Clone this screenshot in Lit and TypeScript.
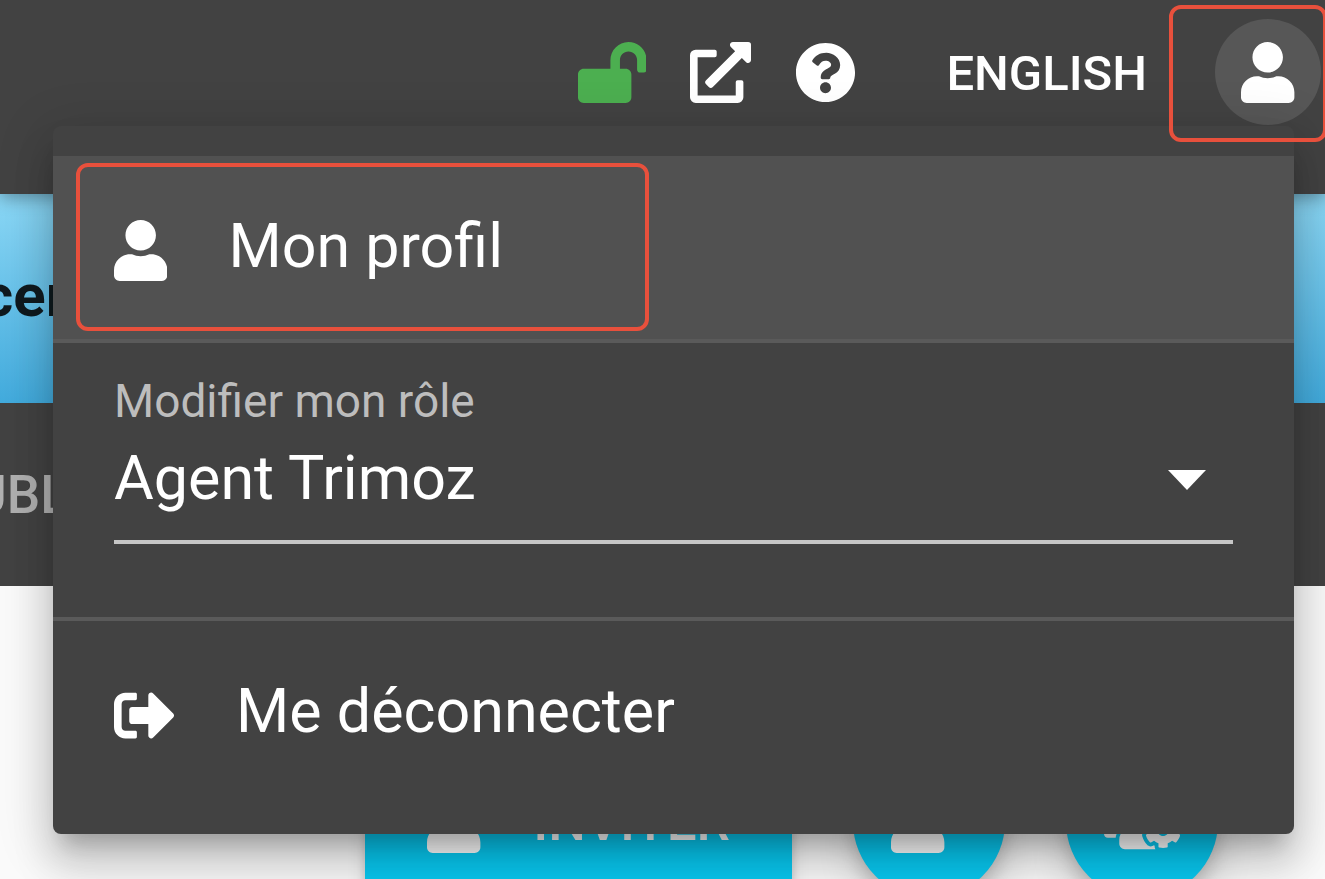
import { LitElement, html, css, svg } from "lit";
import { customElement, property, state } from "lit/decorators.js";

interface Glyph {
  box: string;
  d: string;
}

const GLYPHS: Record<string, Glyph> = {
  unlock: {
    box: "0 0 576 512",
    d: "M423.5 0C339.5.3 272 69.5 272 153.5V224H48c-26.5 0-48 21.5-48 48v192c0 26.5 21.5 48 48 48h352c26.5 0 48-21.5 48-48V272c0-26.5-21.5-48-48-48h-48v-71.1c0-39.6 31.7-72.5 71.3-72.9 40-.4 72.7 32.1 72.7 72v80c0 13.3 10.7 24 24 24h32c13.3 0 24-10.7 24-24v-80C576 68 507.5-.3 423.5 0z",
  },
  external: {
    box: "0 0 512 512",
    d: "M432,320H400a16,16,0,0,0-16,16V448H64V128H208a16,16,0,0,0,16-16V80a16,16,0,0,0-16-16H48A48,48,0,0,0,0,112V464a48,48,0,0,0,48,48H400a48,48,0,0,0,48-48V336A16,16,0,0,0,432,320ZM488,0h-128c-21.37,0-32.05,25.91-17,41l35.73,35.73L135,320.37a24,24,0,0,0,0,34L157.67,377a24,24,0,0,0,34,0L435.28,133.32,471,169c15,15,41,4.5,41-17V24A24,24,0,0,0,488,0Z",
  },
  help: {
    box: "0 0 512 512",
    d: "M504 256c0 136.997-111.043 248-248 248S8 392.997 8 256C8 119.083 119.043 8 256 8s248 111.083 248 248zM262.655 90c-54.497 0-89.255 22.957-116.549 63.758-3.536 5.286-2.353 12.415 2.715 16.258l34.699 26.31c5.205 3.947 12.621 3.008 16.665-2.122 17.864-22.658 30.113-35.797 57.303-35.797 20.429 0 45.698 13.148 45.698 32.958 0 14.976-12.363 22.667-32.534 33.976C247.128 238.528 216 254.941 216 296v4c0 6.627 5.373 12 12 12h56c6.627 0 12-5.373 12-12v-1.333c0-28.462 83.186-29.647 83.186-106.667 0-58.002-60.165-102-116.531-102zM256 338c-25.365 0-46 20.635-46 46 0 25.364 20.635 46 46 46s46-20.636 46-46c0-25.365-20.635-46-46-46z",
  },
  user: {
    box: "0 0 448 512",
    d: "M224 256c70.7 0 128-57.3 128-128S294.7 0 224 0 96 57.3 96 128s57.3 128 128 128zm89.6 32h-16.7c-22.2 10.2-46.9 16-72.9 16s-50.6-5.8-72.9-16h-16.7C60.2 288 0 348.2 0 422.4V464c0 26.5 21.5 48 48 48h352c26.5 0 48-21.5 48-48v-41.6c0-74.2-60.2-134.4-134.4-134.4z",
  },
  userPlus: {
    box: "0 0 640 512",
    d: "M624 208h-64v-64c0-8.8-7.2-16-16-16h-32c-8.8 0-16 7.2-16 16v64h-64c-8.8 0-16 7.2-16 16v32c0 8.800 7.200 16 16 16h64v64c0 8.800 7.200 16 16 16h32c8.800 0 16-7.200 16-16v-64h64c8.800 0 16-7.200 16-16v-32c0-8.800-7.200-16-16-16zM224 256c70.7 0 128-57.3 128-128S294.7 0 224 0 96 57.3 96 128s57.3 128 128 128zm89.6 32h-16.7c-22.2 10.2-46.9 16-72.9 16s-50.6-5.8-72.9-16h-16.7C60.2 288 0 348.2 0 422.4V464c0 26.5 21.5 48 48 48h352c26.5 0 48-21.5 48-48v-41.6c0-74.2-60.2-134.4-134.4-134.4z",
  },
  signout: {
    box: "0 0 512 512",
    d: "M497 273L329 441c-15 15-41 4.5-41-17v-96H152c-13.3 0-24-10.7-24-24v-96c0-13.3 10.7-24 24-24h136V88c0-21.4 25.9-32 41-17l168 168c9.3 9.4 9.3 24.6 0 34zM192 436v-40c0-6.6-5.4-12-12-12H96c-17.7 0-32-14.3-32-32V160c0-17.7 14.3-32 32-32h84c6.6 0 12-5.4 12-12V76c0-6.6-5.4-12-12-12H96c-53 0-96 43-96 96v192c0 53 43 96 96 96h84c6.6 0 12-5.4 12-12z",
  },
  team: {
    box: "0 0 640 512",
    d: "M610.5 341.3c2.6-14.1 2.6-28.5 0-42.6l25.8-14.9c3-1.7 4.3-5.2 3.3-8.5-6.7-21.6-18.2-41.2-33.2-57.4-2.3-2.5-6-3.1-9-1.4l-25.8 14.9c-10.9-9.3-23.4-16.5-36.9-21.3v-29.8c0-3.4-2.4-6.4-5.7-7.1-22.3-5-45-4.8-66.2 0-3.3.7-5.7 3.7-5.7 7.1v29.8c-13.5 4.8-26 12-36.9 21.3l-25.8-14.9c-2.9-1.7-6.7-1.1-9 1.4-15 16.2-26.5 35.8-33.2 57.4-1 3.3.4 6.8 3.3 8.5l25.8 14.9c-2.6 14.1-2.6 28.5 0 42.6l-25.8 14.9c-3 1.7-4.3 5.2-3.3 8.5 6.7 21.6 18.2 41.1 33.2 57.4 2.3 2.5 6 3.1 9 1.4l25.8-14.9c10.9 9.3 23.4 16.5 36.9 21.3v29.8c0 3.4 2.4 6.4 5.7 7.1 22.3 5 45 4.8 66.2 0 3.3-.7 5.7-3.7 5.7-7.1v-29.8c13.5-4.8 26-12 36.9-21.3l25.8 14.9c2.9 1.7 6.7 1.1 9-1.4 15-16.2 26.5-35.8 33.2-57.4 1-3.3-.4-6.8-3.3-8.5l-25.8-14.9zM496 368.5c-26.8 0-48.5-21.8-48.5-48.5s21.8-48.5 48.5-48.5 48.5 21.8 48.5 48.5-21.7 48.5-48.5 48.5zM96 224c35.3 0 64-28.7 64-64s-28.7-64-64-64-64 28.7-64 64 28.7 64 64 64zm224 32c1.9 0 3.7-.5 5.6-.6 8.3-21.7 20.5-42.1 36.3-59.2 7.4-8 17.9-12.6 28.9-12.6 6.9 0 13.7 1.8 19.6 5.3l7.9 4.6c.8-.5 1.6-.9 2.4-1.4 7-14.6 11.2-30.8 11.2-48 0-61.9-50.1-112-112-112S208 82.1 208 144c0 61.9 50.1 112 112 112zm105.2 194.5c-2.3-1.2-4.6-2.6-6.8-3.9-8.2 4.8-15.3 9.8-27.5 9.8-10.9 0-21.4-4.6-28.9-12.6-18.3-19.8-32.3-43.9-40.2-69.6-10.7-34.5 24.9-49.7 25.8-50.3-.1-2.6-.1-5.2 0-7.8l-7.9-4.6c-3.8-2.2-7-5-9.8-8.1-3.3.2-6.5.6-9.8.6-24.6 0-47.6-6-68.5-16h-8.3C179.6 288 128 339.6 128 403.2V432c0 26.5 21.5 48 48 48h255.4c-3.7-6-6.2-12.8-6.2-20.3v-9.2zM173.1 274.6C161.5 263.1 145.6 256 128 256H64c-35.3 0-64 28.7-64 64v32c0 17.7 14.3 32 32 32h65.9c6.3-47.4 34.9-87.3 75.2-109.4z",
  },
  caret: { box: "0 0 38 20", d: "M0 0H38L19 20Z" },
};

@customElement("ui-icon")
export class UiIcon extends LitElement {
  @property() name = "user";

  static styles = css`
    :host {
      display: block;
      flex: none;
      height: 61px;
    }
    svg {
      display: block;
      height: 100%;
      width: auto;
      fill: currentColor;
    }
  `;

  render() {
    const glyph = GLYPHS[this.name];
    return html`<svg viewBox=${glyph.box} aria-hidden="true">${svg`<path d=${glyph.d}></path>`}</svg>`;
  }
}

@customElement("user-menu")
export class UserMenu extends LitElement {
  @state() private role = "Agent Trimoz";

  static styles = css`
    :host {
      display: block;
      box-sizing: border-box;
      padding: 30px 0;
      border-radius: 8px;
      background: #424242;
      color: #fff;
      box-shadow:
        0 19px 19px -11px rgba(0, 0, 0, 0.2),
        0 30px 38px 4px rgba(0, 0, 0, 0.14),
        0 11px 53px 8px rgba(0, 0, 0, 0.12);
    }
    .item {
      display: flex;
      align-items: center;
      gap: 61px;
      width: 100%;
      height: 183px;
      padding: 0 61px;
      box-sizing: border-box;
      border: 0;
      background: none;
      color: inherit;
      font: 400 61px/68px Roboto, sans-serif;
      text-align: left;
      text-decoration: none;
    }
    .item ui-icon {
      padding-top: 6px;
    }
    .active {
      background: #515151;
    }
    .text {
      padding-bottom: 4px;
    }
    .rule {
      height: 4px;
      margin: 0;
      border: 0;
      background: #5a5a5a;
    }
    .role {
      display: grid;
      padding: 31px 61px 73px;
    }
    .label {
      color: #bdbdbd;
      font-size: 46px;
      line-height: 54px;
    }
    .field {
      display: flex;
      align-items: center;
      padding-bottom: 12px;
      border-bottom: 4px solid #c6c6c6;
    }
    .select {
      appearance: none;
      flex: 1;
      min-width: 0;
      height: 100px;
      padding: 0;
      border: 0;
      background: none;
      color: inherit;
      font: 400 61px/100px Roboto, sans-serif;
    }
    .caret {
      height: 20px;
      margin-right: 27px;
      padding-top: 4px;
      pointer-events: none;
    }
  `;

  render() {
    return html`
      <a class="item active" href="#profil">
        <ui-icon name="user"></ui-icon><span class="text">Mon profil</span>
      </a>
      <hr class="rule" />
      <div class="role">
        <label class="label" for="role">Modifier mon rôle</label>
        <div class="field">
          <select
            class="select"
            id="role"
            @change=${(e: Event) => (this.role = (e.target as HTMLSelectElement).value)}
          >
            <option>${this.role}</option>
          </select>
          <ui-icon class="caret" name="caret"></ui-icon>
        </div>
      </div>
      <hr class="rule" />
      <button class="item" type="button">
        <ui-icon name="signout"></ui-icon><span class="text">Me déconnecter</span>
      </button>
    `;
  }
}

@customElement("app-root")
export class AppRoot extends LitElement {
  static styles = css`
    :host {
      display: flex;
      flex-direction: column;
      position: relative;
      height: 100vh;
      overflow: hidden;
      background: #fafafa;
      color: #fff;
      font-family: Roboto, sans-serif;
    }
    button {
      margin: 0;
      padding: 0;
      border: 0;
      background: none;
      color: inherit;
      font: 500 49px/58px Roboto, sans-serif;
      white-space: nowrap;
    }
    .bar {
      display: flex;
      flex: none;
      justify-content: flex-end;
      align-items: center;
      box-sizing: border-box;
      height: 194px;
      padding: 19px 4px 69px;
      background: #424242;
      box-shadow: 0 4px 16px rgba(0, 0, 0, 0.35);
      z-index: 1;
    }
    .tools {
      display: flex;
      gap: 44px;
      margin-right: 90px;
    }
    .unlock {
      color: #4caf50;
    }
    .language {
      padding-top: 4px;
    }
    .avatar {
      display: grid;
      place-items: center;
      width: 106px;
      height: 106px;
      margin-left: 68px;
      border-radius: 50%;
      background: #575757;
    }
    .banner {
      display: flex;
      flex: none;
      align-items: center;
      box-sizing: border-box;
      height: 209px;
      padding-bottom: 6px;
      background: linear-gradient(#8cd8f6, #42abdd);
      color: #101a1f;
    }
    .title {
      margin: 0 0 0 -18px;
      font-size: 60px;
      line-height: 72px;
      font-weight: 700;
    }
    .nav {
      display: flex;
      flex: none;
      align-items: center;
      height: 183px;
      background: #424242;
    }
    .tab {
      margin-left: -28px;
      color: #b0b0b0;
      font-size: 53px;
      line-height: 62px;
      font-weight: 500;
      text-decoration: none;
    }
    .actions {
      display: flex;
      justify-content: flex-end;
      align-items: center;
      gap: 61px;
      padding: 160px 107px 0;
    }
    .invite,
    .round {
      display: flex;
      align-items: center;
      justify-content: center;
      height: 152px;
      background: #08c8f0;
    }
    .invite {
      gap: 30px;
      width: 427px;
      border-radius: 8px;
      font-size: 53px;
      box-shadow:
        0 8px 8px rgba(0, 0, 0, 0.14),
        0 4px 19px rgba(0, 0, 0, 0.12);
    }
    .round {
      width: 152px;
      border-radius: 50%;
      box-shadow:
        0 11px 19px -4px rgba(0, 0, 0, 0.2),
        0 23px 38px rgba(0, 0, 0, 0.14);
    }
    .menu {
      position: absolute;
      top: 126px;
      left: 53px;
      right: 31px;
      z-index: 2;
    }
    .mark {
      position: absolute;
      box-sizing: border-box;
      border: 4px solid #e8503c;
      border-radius: 12px;
      pointer-events: none;
      z-index: 3;
    }
    .mark-avatar {
      top: 5px;
      right: -2px;
      width: 158px;
      height: 137px;
    }
    .mark-profile {
      top: 163px;
      left: 76px;
      width: 573px;
      height: 168px;
    }
  `;

  render() {
    return html`
      <header class="bar">
        <div class="tools">
          <button class="unlock" type="button" aria-label="Déverrouillé"><ui-icon name="unlock"></ui-icon></button>
          <button type="button" aria-label="Ouvrir"><ui-icon name="external"></ui-icon></button>
          <button type="button" aria-label="Aide"><ui-icon name="help"></ui-icon></button>
        </div>
        <button class="language" type="button">ENGLISH</button>
        <button class="avatar" type="button" aria-label="Compte"><ui-icon name="user"></ui-icon></button>
      </header>
      <section class="banner"><h1 class="title">cer</h1></section>
      <nav class="nav"><a class="tab" href="#publications">UBL</a></nav>
      <main class="actions">
        <button class="invite" type="button"><ui-icon name="userPlus"></ui-icon>INVITER</button>
        <button class="round" type="button" aria-label="Utilisateur"><ui-icon name="userPlus"></ui-icon></button>
        <button class="round" type="button" aria-label="Équipe"><ui-icon name="team"></ui-icon></button>
      </main>
      <user-menu class="menu"></user-menu>
      <div class="mark mark-avatar"></div>
      <div class="mark mark-profile"></div>
    `;
  }
}
